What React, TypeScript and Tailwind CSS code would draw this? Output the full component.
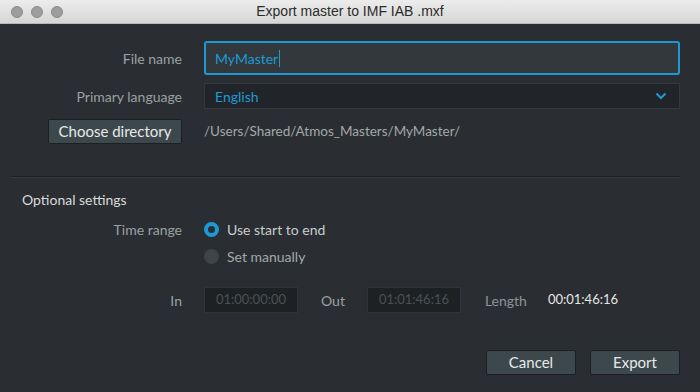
import React from "react";

export default function App() {
  return (
    <div className="w-[700px] h-[392px] overflow-hidden flex flex-col bg-[#2a2e32]" style={{ fontFamily: "Lato, 'Open Sans', sans-serif" }}>
      {/* Title bar */}
      <div className="h-[24px] shrink-0 relative flex items-center justify-center bg-gradient-to-b from-[#ececec] to-[#d6d6d6] border-b border-[#b8b8b8]">
        <div className="absolute left-[11px] top-[6px] flex gap-[8px]">
          <div className="w-[12px] h-[12px] rounded-full bg-[#9d9d9d] border border-[#8a8a8a]" />
          <div className="w-[12px] h-[12px] rounded-full bg-[#9d9d9d] border border-[#8a8a8a]" />
          <div className="w-[12px] h-[12px] rounded-full bg-[#9d9d9d] border border-[#8a8a8a]" />
        </div>
        <span className="text-[14px] text-[#2c2c2c]" style={{ fontFamily: "'Liberation Sans', Arial, sans-serif" }}>Export master to IMF IAB .mxf</span>
      </div>

      {/* Body */}
      <div className="flex-1 flex flex-col pr-[20px] text-[14px]">
        {/* File name */}
        <div className="flex items-center mt-[17px] h-[34px]">
          <div className="w-[182px] text-right text-[#9aa0a4]">File name</div>
          <div className="ml-[22px] flex-1 h-[34px] rounded-[3px] border-2 border-[#1d9ad6] bg-[#33383c] flex items-center pl-[9px]">
            <span className="text-[#1d9ad6]">MyMaster</span>
            <span className="w-[1px] h-[17px] bg-[#1d9ad6] ml-[1px]" />
          </div>
        </div>

        {/* Primary language */}
        <div className="flex items-center mt-[8px] h-[26px]">
          <div className="w-[182px] text-right text-[#9aa0a4]">Primary language</div>
          <div className="ml-[22px] flex-1 h-[26px] bg-[#212529] border border-[#33383c] flex items-center justify-between pl-[10px] pr-[10px]">
            <span className="text-[#1d9ad6]">English</span>
            <svg width="12" height="8" viewBox="0 0 12 8" className="mr-[2px]">
              <path d="M1.5 1.5 L6 6 L10.5 1.5" stroke="#1d9ad6" strokeWidth="2" fill="none" />
            </svg>
          </div>
        </div>

        {/* Choose directory */}
        <div className="flex items-center mt-[10px] h-[25px]">
          <div className="w-[182px] flex justify-end">
            <button className="w-[134px] h-[25px] bg-[#3d484d] border border-[#1c2023] rounded-[2px] text-[#e6e8e9] text-[15px] leading-none">Choose directory</button>
          </div>
          <div className="ml-[22px] text-[#a3a8ab] text-[13.5px]">/Users/Shared/Atmos_Masters/MyMaster/</div>
        </div>

        {/* Divider */}
        <div className="ml-[10px] mt-[32px] h-[2px] border-t border-[#1e2124] border-b border-b-[#363b40]" />

        {/* Optional settings */}
        <div className="ml-[22px] mt-[11px] text-[#d8dadb]">Optional settings</div>

        {/* Time range */}
        <div className="flex items-center mt-[9px] h-[20px]">
          <div className="w-[182px] text-right text-[#9aa0a4]">Time range</div>
          <div className="ml-[22px] flex items-center">
            <div className="w-[15px] h-[15px] rounded-full border-[4px] border-[#1d9ad6] bg-[#2a2e32]" />
            <span className="ml-[8px] text-[#c9cccd]">Use start to end</span>
          </div>
        </div>
        <div className="flex items-center mt-[7px] h-[20px]">
          <div className="w-[182px]" />
          <div className="ml-[22px] flex items-center">
            <div className="w-[15px] h-[15px] rounded-full bg-[#3f4447]" />
            <span className="ml-[8px] text-[#a3a8ab]">Set manually</span>
          </div>
        </div>

        {/* In / Out / Length */}
        <div className="flex items-center mt-[21px] h-[26px]">
          <div className="w-[182px] text-right text-[#9aa0a4]">In</div>
          <div className="ml-[22px] w-[94px] h-[26px] bg-[#1e2124] border border-[#2f3438] flex items-center justify-center text-[#4b5155] text-[13px]">01:00:00:00</div>
          <div className="ml-[23px] text-[#9aa0a4]">Out</div>
          <div className="ml-[22px] w-[94px] h-[26px] bg-[#1e2124] border border-[#2f3438] flex items-center justify-center text-[#4b5155] text-[13px]">01:01:46:16</div>
          <div className="ml-[24px] text-[#8d9396]">Length</div>
          <div className="ml-[21px] text-[#e4e6e7] text-[13px]">00:01:46:16</div>
        </div>

        {/* Buttons */}
        <div className="flex justify-end gap-[14px] mt-[37px]">
          <button className="w-[90px] h-[25px] bg-[#3d484d] border border-[#1c2023] rounded-[2px] text-[#e6e8e9] text-[15px] leading-none">Cancel</button>
          <button className="w-[90px] h-[25px] bg-[#3d484d] border border-[#1c2023] rounded-[2px] text-[#e6e8e9] text-[15px] leading-none">Export</button>
        </div>
      </div>
    </div>
  );
}
